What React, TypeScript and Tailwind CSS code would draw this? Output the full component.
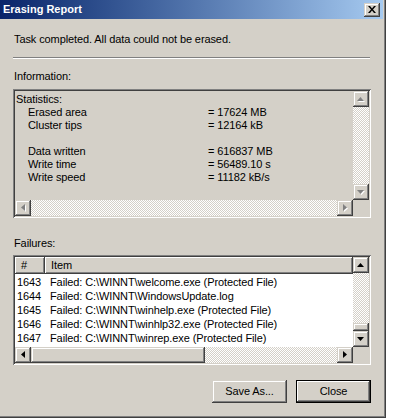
const raised =
  "bg-[#d4d0c8] shadow-[inset_-1px_-1px_#404040,inset_1px_1px_#d4d0c8,inset_-2px_-2px_#808080,inset_2px_2px_#ffffff]"
const sunken =
  "shadow-[inset_1px_1px_#808080,inset_-1px_-1px_#ffffff,inset_2px_2px_#404040,inset_-2px_-2px_#d4d0c8]"
const track = "bg-[repeating-conic-gradient(#d4d0c8_0%_25%,#ffffff_0%_50%)] bg-[length:2px_2px]"

type Dir = "up" | "down" | "left" | "right"

function Arrow({ dir, disabled }: { dir: Dir; disabled?: boolean }) {
  const pts: Record<Dir, string> = {
    up: "3.5,0 7,4 0,4",
    down: "0,0 7,0 3.5,4",
    left: "4,0 4,7 0,3.5",
    right: "0,0 4,3.5 0,7",
  }
  const vert = dir === "up" || dir === "down"
  const w = vert ? 7 : 4
  const h = vert ? 4 : 7
  return (
    <svg width={w + 1} height={h + 1} viewBox={`0 0 ${w + 1} ${h + 1}`}>
      {disabled && <polygon points={pts[dir]} fill="#ffffff" transform="translate(1,1)" />}
      <polygon points={pts[dir]} fill={disabled ? "#808080" : "#000000"} />
    </svg>
  )
}

function ScrollBtn({ dir, disabled }: { dir: Dir; disabled?: boolean }) {
  return (
    <div className={`w-[16px] h-[16px] shrink-0 flex items-center justify-center ${raised}`}>
      <Arrow dir={dir} disabled={disabled} />
    </div>
  )
}

const stats = [
  ["Erased area", "= 17624 MB"],
  ["Cluster tips", "= 12164 kB"],
  ["", ""],
  ["Data written", "= 616837 MB"],
  ["Write time", "= 56489.10 s"],
  ["Write speed", "= 11182 kB/s"],
]

const failures = [
  ["1643", "Failed: C:\\WINNT\\welcome.exe (Protected File)"],
  ["1644", "Failed: C:\\WINNT\\WindowsUpdate.log"],
  ["1645", "Failed: C:\\WINNT\\winhelp.exe (Protected File)"],
  ["1646", "Failed: C:\\WINNT\\winhlp32.exe (Protected File)"],
  ["1647", "Failed: C:\\WINNT\\winrep.exe (Protected File)"],
]

export default function App() {
  return (
    <div className="w-[400px] h-[418px] bg-white flex font-['Liberation_Sans',Arial,sans-serif] text-[11px] tracking-[-0.1px] text-black leading-[13px]">
      <div className="w-[386px] h-[418px] bg-[#d4d0c8] flex flex-col shadow-[inset_-1px_-1px_#404040,inset_-2px_-2px_#808080] pr-[3px]">
        {/* title bar */}
        <div className="h-[19px] shrink-0 flex items-center justify-between bg-gradient-to-r from-[#0a246a] to-[#a6caf0] pl-[3px] pr-[3px]">
          <span className="text-white font-bold text-[11px] tracking-normal">Erasing Report</span>
          <div className={`w-[16px] h-[14px] flex items-center justify-center ${raised}`}>
            <svg width="8" height="7" viewBox="0 0 8 7">
              <path d="M0 0h2l2 2.5L6 0h2L5 3.5 8 7H6L4 4.5 2 7H0l3-3.5z" fill="#000" />
            </svg>
          </div>
        </div>

        <div className="flex flex-col px-[13px]">
          <div className="mt-[14px] pl-[1px]">Task completed. All data could not be erased.</div>
          <div className="mt-[11px] h-[2px] w-[357px] border-t border-[#808080] border-b border-b-white" />
          <div className="mt-[11px] pl-[1px]">Information:</div>

          {/* info box */}
          <div className={`mt-[6px] w-[358px] h-[129px] p-[2px] flex flex-col bg-[#d4d0c8] ${sunken}`}>
            <div className="flex flex-1 min-h-0">
              <div className="flex-1 pl-[1px] pt-[2px]">
                <div>Statistics:</div>
                {stats.map(([k, v], i) => (
                  <div key={i} className="flex h-[13px]">
                    <span className="w-[192px] pl-[12px]">{k}</span>
                    <span>{v}</span>
                  </div>
                ))}
              </div>
              <div className={`w-[16px] flex flex-col ${track}`}>
                <ScrollBtn dir="up" disabled />
                <div className="flex-1" />
                <ScrollBtn dir="down" disabled />
              </div>
            </div>
            <div className="flex h-[16px]">
              <div className={`flex-1 flex ${track}`}>
                <ScrollBtn dir="left" disabled />
                <div className="flex-1" />
                <ScrollBtn dir="right" disabled />
              </div>
              <div className="w-[16px] bg-[#d4d0c8]" />
            </div>
          </div>

          <div className="mt-[19px] pl-[1px]">Failures:</div>

          {/* failures list */}
          <div className={`mt-[5px] w-[358px] h-[110px] p-[2px] flex flex-col bg-white ${sunken}`}>
            <div className="flex flex-1 min-h-0">
              <div className="flex-1 flex flex-col">
                <div className="flex h-[17px]">
                  <div className="w-[30px] pl-[6px] flex items-center bg-[#d4d0c8] shadow-[inset_-1px_-1px_#404040,inset_1px_1px_#ffffff,inset_-2px_-2px_#808080]">#</div>
                  <div className="flex-1 pl-[6px] flex items-center bg-[#d4d0c8] shadow-[inset_-1px_-1px_#404040,inset_1px_1px_#ffffff,inset_-2px_-2px_#808080]">Item</div>
                </div>
                <div className="pt-[1px]">
                  {failures.map(([n, t]) => (
                    <div key={n} className="flex h-[14px] items-center whitespace-nowrap">
                      <span className="w-[35px] pl-[2px]">{n}</span>
                      <span>{t}</span>
                    </div>
                  ))}
                </div>
              </div>
              <div className={`w-[16px] flex flex-col ${track}`}>
                <ScrollBtn dir="up" />
                <div className="flex-1" />
                <div className={`h-[8px] w-[16px] ${raised}`} />
                <ScrollBtn dir="down" />
              </div>
            </div>
            <div className="flex h-[16px]">
              <div className={`flex-1 flex ${track}`}>
                <ScrollBtn dir="left" />
                <div className={`w-[174px] h-[16px] ${raised}`} />
                <div className="flex-1" />
                <ScrollBtn dir="right" />
              </div>
              <div className="w-[16px] bg-[#d4d0c8]" />
            </div>
          </div>

          {/* buttons */}
          <div className="mt-[15px] flex justify-end gap-[9px] w-[358px]">
            <button className={`w-[75px] h-[23px] flex items-center justify-center ${raised}`}>Save As...</button>
            <button className="w-[75px] h-[23px] flex items-center justify-center bg-[#d4d0c8] shadow-[inset_0_0_0_1px_#000000,inset_-2px_-2px_#404040,inset_2px_2px_#ffffff,inset_-3px_-3px_#808080]">
              Close
            </button>
          </div>
        </div>
      </div>
    </div>
  )
}
